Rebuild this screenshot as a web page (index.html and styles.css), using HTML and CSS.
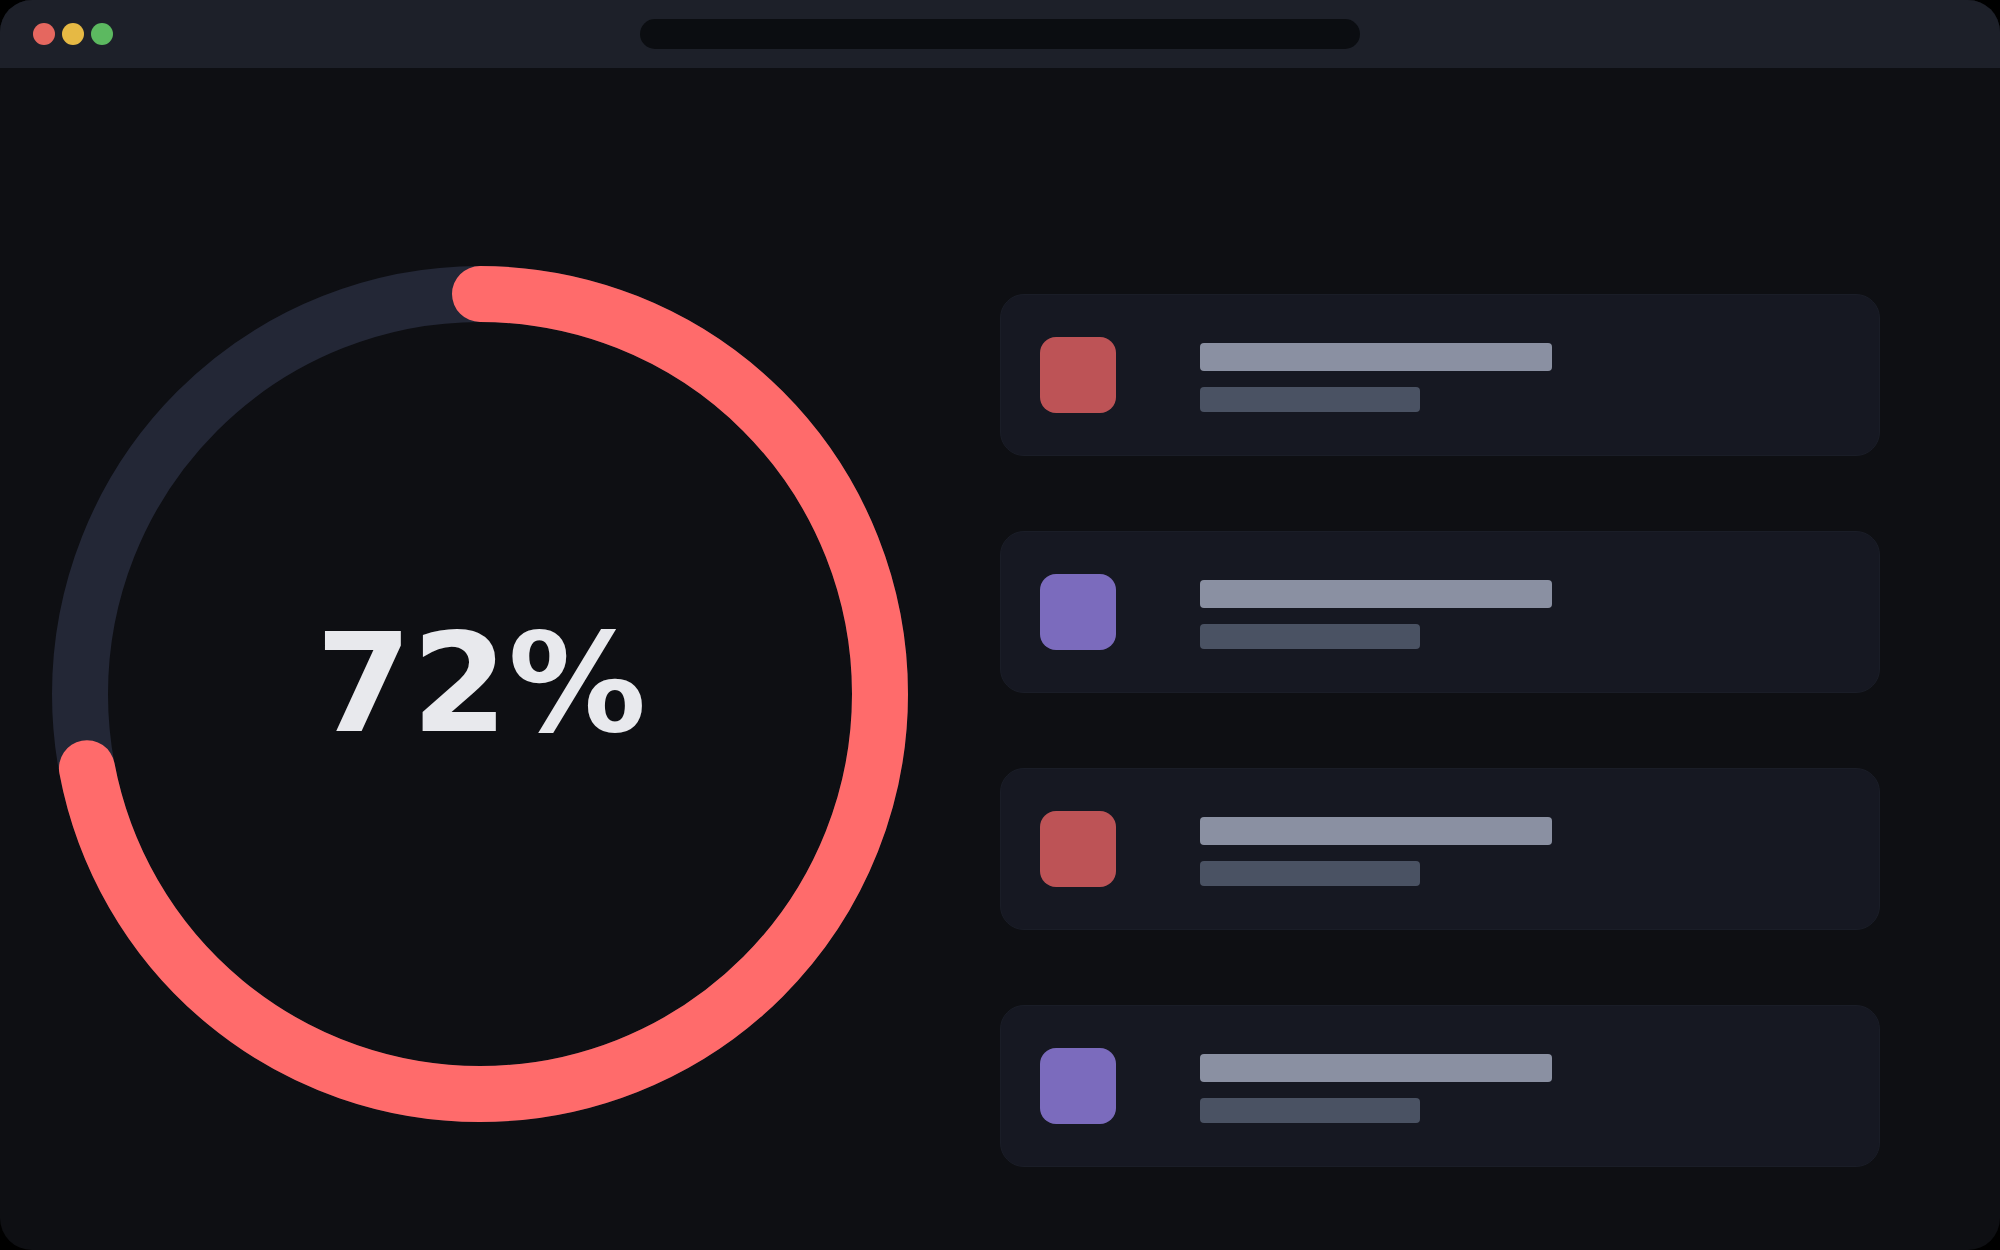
FILE: index.html
```html
<!DOCTYPE html>
<html>
<head>
  <title>Progress</title>
  <link rel="stylesheet" href="styles.css">
</head>
<body>
  <div class="window">
    <div class="titlebar">
      <div class="dots">
        <span class="dot red"></span>
        <span class="dot yellow"></span>
        <span class="dot green"></span>
      </div>
      <div class="address"></div>
      <div></div>
    </div>

    <div class="main">
      <svg class="ring" width="860" height="860" viewBox="0 0 860 860">
        <circle cx="430" cy="430" r="400" fill="none" stroke="#232736" stroke-width="56"/>
        <circle cx="430" cy="430" r="400" fill="none" stroke="#ff6b6b" stroke-width="56"
                stroke-linecap="round" stroke-dasharray="1809.56 2513.27"
                transform="rotate(-90 430 430)"/>
        <text x="431" y="467" text-anchor="middle" class="percent">72%</text>
      </svg>

      <div class="list">
        <div class="card">
          <div class="icon red-icon"></div>
          <div class="lines">
            <div class="line long"></div>
            <div class="line short"></div>
          </div>
        </div>
        <div class="card">
          <div class="icon purple-icon"></div>
          <div class="lines">
            <div class="line long"></div>
            <div class="line short"></div>
          </div>
        </div>
        <div class="card">
          <div class="icon red-icon"></div>
          <div class="lines">
            <div class="line long"></div>
            <div class="line short"></div>
          </div>
        </div>
        <div class="card">
          <div class="icon purple-icon"></div>
          <div class="lines">
            <div class="line long"></div>
            <div class="line short"></div>
          </div>
        </div>
      </div>
    </div>
  </div>
</body>
</html>
```

FILE: styles.css
```css
html {
  background-color: #000;
}

body {
  margin: 0;
  font-family: "DejaVu Sans", sans-serif;
}

.window {
  width: 2000px;
  height: 1250px;
  border-radius: 32px;
  overflow: hidden;
  background-color: #0e0f13;
  display: flex;
  flex-direction: column;
}

.titlebar {
  height: 68px;
  flex-shrink: 0;
  background-color: #1d2029;
  display: grid;
  grid-template-columns: 1fr 720px 1fr;
  align-items: center;
}

.dots {
  display: flex;
  gap: 7px;
  padding-left: 33px;
}

.dot {
  width: 22px;
  height: 22px;
  border-radius: 50%;
}

.red { background-color: #e5675f; }
.yellow { background-color: #e6b944; }
.green { background-color: #5cb960; }

.address {
  height: 30px;
  border-radius: 15px;
  background-color: #0b0d11;
}

.main {
  display: flex;
  align-items: flex-start;
  padding: 196px 0 0 50px;
}

.ring {
  flex-shrink: 0;
  display: block;
}

.percent {
  font-family: "DejaVu Sans", sans-serif;
  font-weight: bold;
  font-size: 138px;
  fill: #e8e9ed;
}

.list {
  width: 880px;
  margin-left: 90px;
  margin-top: 30px;
  display: flex;
  flex-direction: column;
  gap: 75px;
}

.card {
  height: 160px;
  box-sizing: content-box;
  border: 1px solid #1a1d27;
  border-radius: 24px;
  background-color: #161822;
  display: flex;
  align-items: center;
  padding-left: 39px;
}

.icon {
  width: 76px;
  height: 76px;
  border-radius: 16px;
  flex-shrink: 0;
}

.red-icon { background-color: #bd5356; }
.purple-icon { background-color: #7b6bbd; }

.lines {
  margin-left: 84px;
  margin-top: 4px;
  display: flex;
  flex-direction: column;
  gap: 16px;
}

.line {
  border-radius: 4px;
}

.long {
  width: 352px;
  height: 28px;
  background-color: #8a90a2;
}

.short {
  width: 220px;
  height: 25px;
  background-color: #4a5263;
}
```
